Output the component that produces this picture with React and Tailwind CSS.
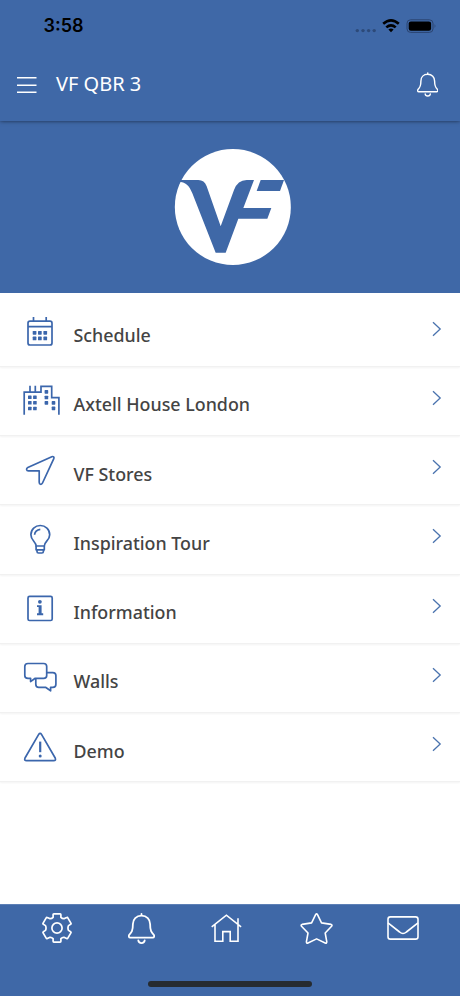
import React from "react";

const items = [
  { label: "Schedule", icon: CalendarIcon },
  { label: "Axtell House London", icon: BuildingsIcon },
  { label: "VF Stores", icon: ArrowIcon },
  { label: "Inspiration Tour", icon: BulbIcon },
  { label: "Information", icon: InfoIcon },
  { label: "Walls", icon: ChatIcon },
  { label: "Demo", icon: WarningIcon },
];

function App() {
  return (
    <div className="flex flex-col w-[460px] h-[996px] overflow-hidden bg-white font-['Noto_Sans','Open_Sans',sans-serif]">
      <Header />
      <div className="flex shrink-0 h-[171.5px] bg-[#3f68a7] pt-[19px] pl-[165px]">
        <Logo />
      </div>
      <ul className="flex-1 pt-[5px]">
        {items.map((item) => (
          <MenuRow key={item.label} {...item} />
        ))}
      </ul>
      <Footer />
    </div>
  );
}

function Header() {
  return (
    <header className="relative z-10 flex flex-col shrink-0 h-[121px] bg-[#3f68a7] shadow-[0_0px_4px_rgba(0,0,0,0.6)]">
      <div className="flex items-center h-[51px] pl-[43.5px] pr-[19px]">
        <span className="flex-1 font-['Inter',sans-serif] text-[18px] leading-none font-semibold text-black">
          3:58
        </span>
        <StatusIcons />
      </div>
      <div className="flex items-center h-[67px] pl-[17px] pr-[22px]">
        <svg className="w-5 h-4" viewBox="0 0 20 16" stroke="#fff" strokeWidth="1.4">
          <path d="M0 .8H19.5M0 8.3H19.5M0 15.3H19.5" />
        </svg>
        <h1 className="flex-1 pl-[19px] pb-px text-[20px] leading-none text-white">
          VF QBR 3
        </h1>
        <BellIcon className="w-[21.5px] h-[25px]" />
      </div>
    </header>
  );
}

function StatusIcons() {
  return (
    <svg className="w-[86px] h-[18px]" viewBox="355 16 86 18">
      <g fill="#2d4a79">
        <circle cx="357.3" cy="29.6" r="1.7" />
        <circle cx="363" cy="29.6" r="1.7" />
        <circle cx="368.6" cy="29.6" r="1.7" />
        <circle cx="374.2" cy="29.6" r="1.7" />
      </g>
      <g fill="none" stroke="#000" strokeWidth="2.6">
        <path d="M383.2 22.8Q391 15.8 398.8 22.8" />
        <path d="M386.3 26.4Q391 22.2 395.7 26.4" />
      </g>
      <path d="M391 31.2L388.4 28.6Q391 26.6 393.6 28.6Z" />
      <rect x="407" y="18.8" width="26" height="12.6" rx="3.6" fill="none" stroke="#2b4470" />
      <rect x="408.7" y="20.4" width="22.4" height="9.4" rx="2.2" />
      <path d="M434.6 23.1Q436.4 25.1 434.6 27.1Z" fill="#2b4470" />
    </svg>
  );
}

function Logo() {
  return (
    <svg className="size-[135px]" viewBox="0 0 405 405">
      <circle cx="203.5" cy="201" r="174" fill="#fff" />
      <g fill="#3f68a7">
        <path d="M44 120H100Q118 120 125 139L167 259L207 150Q218 120 245 120H267L235 204H319L307 236H220L182 338H152L82 160C73 136 62 126 40 125Z" />
        <path d="M287 120H357L345 153H275Z" />
      </g>
    </svg>
  );
}

function MenuRow({ label, icon: Icon }) {
  return (
    <li className="flex items-start h-[69.25px] pl-5 pr-[18px] border-b border-[#f1f1f1] shadow-[0_1px_2px_rgba(0,0,0,0.05)]">
      <svg
        className="size-10 mt-[14.5px] text-[#3b66ac]"
        viewBox="0 0 40 40"
        fill="none"
        stroke="currentColor"
        strokeWidth="1.7"
        strokeLinejoin="round"
      >
        <Icon />
      </svg>
      <span className="flex-1 pl-[13.5px] pt-[24.6px] text-[17.85px] leading-[26px] font-medium text-[#444]">
        {label}
      </span>
      <svg
        className="w-[10px] h-4 mt-[23px]"
        viewBox="0 0 10 16"
        fill="none"
        stroke="#4a73ae"
        strokeWidth="1.3"
      >
        <path d="M1 1.2L8.2 8L1 14.8" />
      </svg>
    </li>
  );
}

function Footer() {
  return (
    <footer className="flex flex-col justify-between items-center shrink-0 h-[92.5px] bg-[#3f68a7] border-t border-[#5d80b6] pt-[8px] pb-[9px]">
      <nav className="flex justify-between items-start w-full px-[41.5px]">
        <GearIcon />
        <BellIcon className="w-[27px] h-[31px]" />
        <HouseIcon />
        <StarIcon />
        <MailIcon />
      </nav>
      <div className="w-[164px] h-[6px] rounded-full bg-[#262b30]" />
    </footer>
  );
}

/* menu icons, drawn in a 40x40 box */

function CalendarIcon() {
  return (
    <>
      <rect x="8" y="9.2" width="24" height="23.8" rx="2" />
      <path d="M8 14.6H32M13.5 5V9M26.2 5V9" />
      <Dots
        size={3.7}
        points={[
          [12.7, 19],
          [18, 19],
          [23.4, 19],
          [12.7, 24.6],
          [18, 24.6],
          [23.4, 24.6],
        ]}
      />
    </>
  );
}

function BuildingsIcon() {
  return (
    <>
      <path
        strokeLinejoin="miter"
        d="M4.2 33.7V11.1H21V5.4H31.7V16.7H38.9V33.7M10 4.8V11M15.3 4.8V11"
      />
      <Dots
        size={3.6}
        points={[
          [8, 14.5],
          [13.1, 14.5],
          [8, 20],
          [13.1, 20],
          [8, 25.7],
          [13.1, 25.7],
          [24.6, 9.1],
          [24.6, 14.7],
          [24.6, 20.1],
          [31.7, 20.1],
          [31.7, 25.6],
        ]}
      />
    </>
  );
}

function Dots({ points, size }) {
  return (
    <g fill="currentColor" stroke="none">
      {points.map(([x, y]) => (
        <rect key={`${x}-${y}`} x={x} y={y} width={size} height={size} rx="0.6" />
      ))}
    </g>
  );
}

function ArrowIcon() {
  return (
    <path d="M31.8 5.7L7.8 16.6C5.9 17.5 6.3 19.8 8.4 19.8H19.2V31.2C19.2 33.7 21.6 34 22.5 32L33.8 7.7C34.4 6.3 33.4 5 31.8 5.7Z" />
  );
}

function BulbIcon() {
  return (
    <>
      <path d="M16.1 26C16.1 21.5 10.9 20.6 10.9 14.7C10.9 9.3 15.2 5.5 20.3 5.5C25.4 5.5 29.7 9.3 29.7 14.7C29.7 20.6 24.3 21.5 24.3 26Z" />
      <path d="M16.1 26V29.8H24.3V26M17 29.8V31.5Q17 33 18.5 33H21.9Q23.4 33 23.4 31.5V29.8" />
      <path d="M14.6 14.8Q15 9.9 20.3 9.3" />
    </>
  );
}

function InfoIcon() {
  return (
    <>
      <rect x="8" y="7.3" width="24.2" height="24.2" rx="1.6" />
      <g fill="currentColor" stroke="none">
        <circle cx="19.9" cy="12.8" r="1.9" />
        <path d="M17 16.2H21.6V24.3H23.2V26.2H17V24.3H18.6V18.1H17Z" />
      </g>
    </>
  );
}

function ChatIcon() {
  return (
    <>
      <path d="M8 5.5H23.6Q26.7 5.5 26.7 8.6V17.4Q26.7 20.3 23.6 20.3H15.2L10.6 23.6V20.3H8Q4.8 20.3 4.8 17.4V8.6Q4.8 5.5 8 5.5Z" />
      <path d="M26.7 14.6H32.8Q35.9 14.6 35.9 17.6V26.2Q35.9 29.3 32.8 29.3H30.6V32.8L25.5 29.3H18.8Q15.8 29.3 15.8 26.2V20.3" />
    </>
  );
}

function WarningIcon() {
  return (
    <>
      <path d="M18.7 6.4Q20.1 4.2 21.5 6.4L35.2 30Q36.3 32.7 33.6 32.7H6.6Q3.9 32.7 5 30Z" />
      <path d="M20.2 13.6V24.2" strokeWidth="2.2" />
      <circle cx="20.2" cy="28" r="1.5" fill="currentColor" stroke="none" />
    </>
  );
}

/* white bar icons */

function BellIcon({ className }) {
  return (
    <svg
      className={className}
      viewBox="0 0 27 31"
      fill="none"
      stroke="#fff"
      strokeWidth="1.8"
      strokeLinecap="round"
      strokeLinejoin="round"
    >
      <path d="M13.5 .9V2.6M13.5 2.6C8.2 2.6 4.9 6.3 4.9 11C4.9 18 3.5 19.5 1.2 21.9C.3 23 .8 24.6 2.2 24.6H24.8C26.2 24.6 26.7 23 25.8 21.9C23.5 19.5 22.1 18 22.1 11C22.1 6.3 18.8 2.6 13.5 2.6Z" />
      <path d="M10.3 27.4C10.7 30.9 16.3 30.9 16.7 27.4" />
    </svg>
  );
}

function GearIcon() {
  return (
    <svg
      className="size-[30px] mt-[.5px]"
      viewBox="0 0 30 30"
      fill="none"
      stroke="#fff"
      strokeWidth="1.7"
      strokeLinejoin="round"
    >
      <path d="M11.9 .9H18.1Q18.9 .9 18.9 1.7V4.4Q20.4 5.9 22.4 5.6L24.7 4.5Q25.4 4.1 25.8 4.8L28.9 10.2Q29.3 10.9 28.6 11.3L26.5 12.6Q25.4 15 26.5 17.4L28.6 18.7Q29.3 19.1 28.9 19.8L25.8 25.2Q25.4 25.9 24.7 25.5L22.4 24.4Q20.4 24.1 18.9 25.6V28.3Q18.9 29.1 18.1 29.1H11.9Q11.1 29.1 11.1 28.3V25.6Q9.6 24.1 7.6 24.4L5.3 25.5Q4.6 25.9 4.2 25.2L1.1 19.8Q.7 19.1 1.4 18.7L3.5 17.4Q4.6 15 3.5 12.6L1.4 11.3Q.7 10.9 1.1 10.2L4.2 4.8Q4.6 4.1 5.3 4.5L7.6 5.6Q9.6 5.9 11.1 4.4V1.7Q11.1 .9 11.9 .9Z" />
      <circle cx="15" cy="15" r="5.1" />
    </svg>
  );
}

function HouseIcon() {
  return (
    <svg
      className="w-[31px] h-[30px] mt-[.5px]"
      viewBox="0 0 31 30"
      fill="none"
      stroke="#fff"
      strokeWidth="1.6"
    >
      <path d="M.7 13.9L15.4 2.2L30.1 13.9M4 11.4V28.2H11.8V18.6H19.2V28.2H27V5.2" />
    </svg>
  );
}

function StarIcon() {
  return (
    <svg
      className="w-[33px] h-[31px] ml-[2px] -mr-[2px]"
      viewBox="0 0 33 31"
      fill="none"
      stroke="#fff"
      strokeWidth="1.6"
      strokeLinejoin="round"
    >
      <path d="M15.6 1.6Q16.6 .2 17.5 1.6L21.5 9.9L31.1 11.4Q32.6 11.9 31.6 13.2L25.2 20L26.8 28.8Q26.8 30.6 25.2 30L16.6 25.9L8 30Q6.4 30.6 6.4 28.8L8 20L1.5 13.2Q.6 11.9 2.1 11.4L11.6 9.9Z" />
    </svg>
  );
}

function MailIcon() {
  return (
    <svg
      className="w-[32px] h-[24px] mt-[3.5px]"
      viewBox="0 0 32 24"
      fill="none"
      stroke="#fff"
      strokeWidth="1.6"
      strokeLinejoin="round"
    >
      <rect x="1" y=".9" width="30" height="22.2" rx="2.4" />
      <path d="M1 6.8L12.6 16Q16 19 19.4 16L31 6.8" />
    </svg>
  );
}

export default App;
